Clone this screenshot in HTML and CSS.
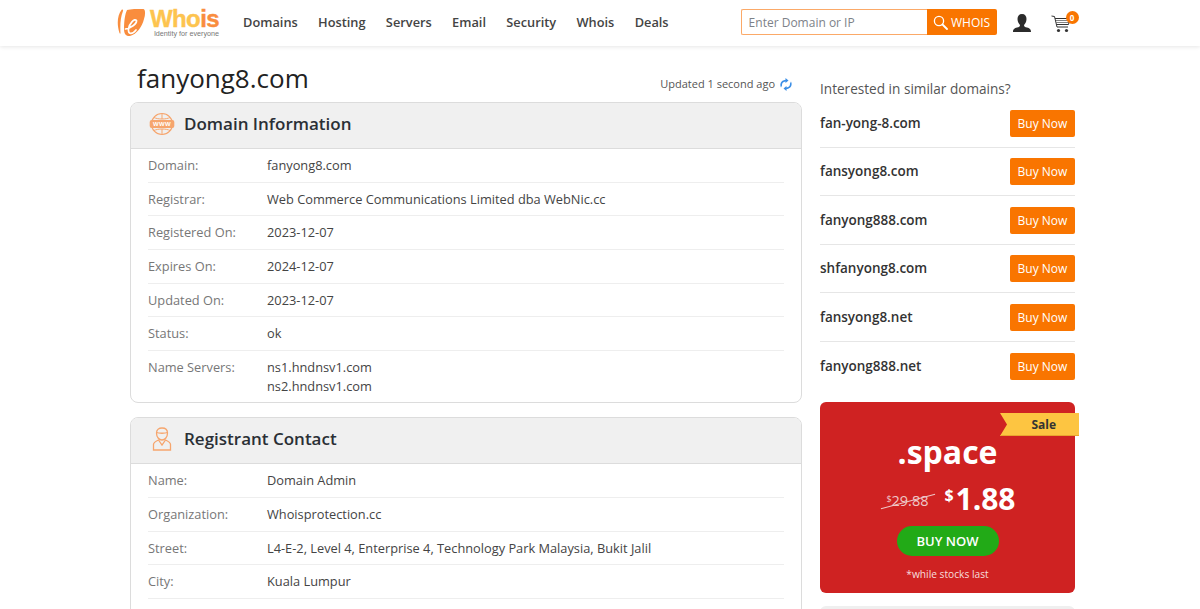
FILE: index.html
```html
<!DOCTYPE html>
<html lang="en">
<head>
<meta charset="utf-8">
<title>fanyong8.com - Whois</title>
<link rel="stylesheet" href="styles.css">
</head>
<body>
<header class="topbar">
  <div class="topbar-inner">
    <a class="logo" href="#">
      <svg class="logo-mark" width="29" height="28" viewBox="0 0 29 28">
        <path d="M4.500 1 C0.500 6 -0.500 15 2.500 24 C3 25 3.500 25 3.500 24 C3 16 3.500 8 6 2 C6.500 1 5.500 0 4.500 1 Z" fill="#f98d3e"/>
        <path d="M10 1 C14 0 22 -0.500 26.500 0 C28.500 0.500 28.500 6 27 10 C25 18 20 25 13 27 C9 27.500 7 25 7 20 C7 12 8 5 10 1 Z" fill="#f98d3e"/>
        <path d="M8.500 20 C13.500 19 20 15 19.500 11.500 C17.500 9 12.500 14 11.500 20 C11 25.500 15 26 19 21" fill="none" stroke="#fff" stroke-width="1.700" stroke-linecap="round"/>
      </svg>
      <span class="logo-text">
        <span class="logo-word"><span class="logo-who">Who</span><span class="logo-is">is</span></span>
        <span class="logo-tag">Identity for everyone</span>
      </span>
    </a>
    <nav class="nav">
      <a href="#">Domains</a>
      <a href="#">Hosting</a>
      <a href="#">Servers</a>
      <a href="#">Email</a>
      <a href="#">Security</a>
      <a href="#">Whois</a>
      <a href="#">Deals</a>
    </nav>
    <form class="search">
      <input class="search-input" type="text" placeholder="Enter Domain or IP">
      <button class="search-btn" type="button">
        <svg width="15" height="15" viewBox="0 0 15 15"><circle cx="6" cy="6" r="4.600" fill="none" stroke="#fff" stroke-width="1.300"/><path d="M9.500 9.500 L14 14" stroke="#fff" stroke-width="1.800" stroke-linecap="round"/></svg>
        WHOIS
      </button>
    </form>
    <a class="user" href="#" aria-label="Account">
      <svg width="18" height="18" viewBox="0 0 18 18"><path d="M9 0 C12 0 13.500 2 13.500 5 C13.500 8 12 10 11 11 C11 12.500 12 13 14 13.600 C16.500 14.400 18 15 18 18 L0 18 C0 15 1.500 14.400 4 13.600 C6 13 7 12.500 7 11 C6 10 4.500 8 4.500 5 C4.500 2 6 0 9 0 Z" fill="#2b2b2b"/></svg>
    </a>
    <a class="cart" href="#" aria-label="Cart">
      <svg width="20" height="18" viewBox="0 0 20 18"><path d="M0.500 1 L3.500 1.500 L6 12 L17 12 M4 3.500 L19 3.500 L17.500 9.500 L5.300 9.500" fill="none" stroke="#333" stroke-width="1"/><path d="M5 5.500 H18.500 M5.300 7.500 H18" stroke="#333" stroke-width=".6"/><circle cx="7.500" cy="15.500" r="1.600" fill="#333"/><circle cx="15.500" cy="15.500" r="1.600" fill="#333"/></svg>
      <span class="cart-badge">0</span>
    </a>
  </div>
</header>

<main class="page">
  <section class="main-col">
    <div class="title-row">
      <h1 class="domain-title">fanyong8.com</h1>
      <p class="updated">Updated 1 second ago
        <svg width="14" height="15" viewBox="0 0 14 15"><path d="M2 10.500 C0.500 7.500 1.500 3.500 6.500 2.800 L6.500 1 L9.500 3.600 L6.500 6 L6.500 4.500 C4 4.800 2.800 6.500 3 8.500 Z M12 4.500 C13.500 7.500 12.500 11.500 7.500 12.200 L7.500 14 L4.500 11.400 L7.500 9 L7.500 10.500 C10 10.200 11.200 8.500 11 6.500 Z" fill="#3a8ee6"/></svg>
      </p>
    </div>

    <article class="card">
      <div class="card-head">
        <svg class="card-icon" width="26" height="24" viewBox="0 0 26 24" fill="none" stroke="#f6a56d">
          <circle cx="13" cy="12" r="10.500" stroke-width="1.200"/>
          <path d="M5 5.500 C9 7.500 17 7.500 21 5.500 M5 18.500 C9 16.500 17 16.500 21 18.500 M13 1.500 V7 M13 17 V22.500" stroke-width="1"/>
          <rect x="0.700" y="8" width="24.600" height="8" rx="2" fill="#f6a56d" stroke="none"/>
          <text x="13" y="14.300" text-anchor="middle" class="www">WWW</text>
        </svg>
        <h2>Domain Information</h2>
      </div>
      <div class="card-body">
        <div class="row"><span class="label">Domain:</span><span class="value">fanyong8.com</span></div>
        <div class="row"><span class="label">Registrar:</span><span class="value">Web Commerce Communications Limited dba WebNic.cc</span></div>
        <div class="row"><span class="label">Registered On:</span><span class="value">2023-12-07</span></div>
        <div class="row"><span class="label">Expires On:</span><span class="value">2024-12-07</span></div>
        <div class="row"><span class="label">Updated On:</span><span class="value">2023-12-07</span></div>
        <div class="row"><span class="label">Status:</span><span class="value">ok</span></div>
        <div class="row"><span class="label">Name Servers:</span><span class="value">ns1.hndnsv1.com<br>ns2.hndnsv1.com</span></div>
      </div>
    </article>

    <article class="card">
      <div class="card-head">
        <svg class="card-icon" width="26" height="24" viewBox="0 0 26 24" fill="none" stroke="#f6a56d" stroke-width="1.300">
          <path d="M7.500 6 C7.500 2.500 10 1 13 1 C16 1 18.500 2.500 18.500 6 C18.500 10 16 13 13 13 C10 13 7.500 10 7.500 6 Z"/>
          <path d="M7.500 5.500 C10 6.500 16 6.500 18.500 5.500"/>
          <path d="M9.500 13 C6 14.500 4.500 15.500 4.500 17.500 V23 H21.500 V17.500 C21.500 15.500 20 14.500 16.500 13 L13 18 Z"/>
        </svg>
        <h2>Registrant Contact</h2>
      </div>
      <div class="card-body card-body-open">
        <div class="row"><span class="label">Name:</span><span class="value">Domain Admin</span></div>
        <div class="row"><span class="label">Organization:</span><span class="value">Whoisprotection.cc</span></div>
        <div class="row"><span class="label">Street:</span><span class="value">L4-E-2, Level 4, Enterprise 4, Technology Park Malaysia, Bukit Jalil</span></div>
        <div class="row"><span class="label">City:</span><span class="value">Kuala Lumpur</span></div>
      </div>
    </article>
  </section>

  <aside class="side-col">
    <h3 class="side-title">Interested in similar domains?</h3>
    <ul class="suggest">
      <li><span>fan-yong-8.com</span><a class="buy" href="#">Buy Now</a></li>
      <li><span>fansyong8.com</span><a class="buy" href="#">Buy Now</a></li>
      <li><span>fanyong888.com</span><a class="buy" href="#">Buy Now</a></li>
      <li><span>shfanyong8.com</span><a class="buy" href="#">Buy Now</a></li>
      <li><span>fansyong8.net</span><a class="buy" href="#">Buy Now</a></li>
      <li><span>fanyong888.net</span><a class="buy" href="#">Buy Now</a></li>
    </ul>
    <div class="promo">
      <span class="ribbon">Sale</span>
      <div class="promo-tld">.space</div>
      <div class="promo-price">
        <span class="old"><sup>$</sup>29.88</span>
        <span class="new"><sup>$</sup>1.88</span>
      </div>
      <a class="promo-btn" href="#">BUY NOW</a>
      <div class="promo-note">*while stocks last</div>
    </div>
    <div class="next-box"></div>
  </aside>
</main>
</body>
</html>
```

FILE: styles.css
```css
* { box-sizing: border-box; }
html, body { height: 609px; overflow: hidden; }
body {
  margin: 0;
  background: #fff;
  color: #333;
  font-family: "Open Sans", "Liberation Sans", sans-serif;
  font-size: 12.800px;
}
a { text-decoration: none; color: inherit; }

.topbar {
  height: 46px;
  background: #fff;
  box-shadow: 0 1px 4px rgba(0, 0, 0, .1);
  position: relative;
}
.topbar-inner {
  width: 1200px;
  height: 44px;
  padding-left: 117px;
  display: flex;
  align-items: center;
}
.logo { display: flex; align-items: center; width: 126px; }
.logo-mark { flex: none; margin-top: 1px; }
.logo-text { display: flex; flex-direction: column; align-items: flex-end; width: 73px; margin-top: 2px; }
.logo-word {
  font-family: "Liberation Sans", sans-serif;
  font-weight: 700;
  font-size: 24px;
  line-height: 20px;
  letter-spacing: -.6px;
  -webkit-text-stroke: .4px currentColor;
}
.logo-who { color: #fdc44f; }
.logo-is { color: #f98d3e; }
.logo-tag {
  font-family: "Liberation Sans", sans-serif;
  font-size: 7.200px;
  line-height: 8px;
  color: #777;
  margin-top: 1px;
}

.nav { display: flex; gap: 20.300px; font-size: 12.800px; font-weight: 600; color: #444; }
.nav a { line-height: 18px; }

.search {
  display: flex;
  height: 26px;
  width: 256px;
  margin-left: 72px;
  flex: none;
}
.search-input {
  flex: 1;
  min-width: 0;
  border: 1px solid #fba968;
  border-right: 0;
  border-radius: 2px 0 0 2px;
  padding: 0 7px;
  font: 12px "Open Sans", sans-serif;
  outline: none;
}
.search-input::placeholder { color: #7d8288; opacity: 1; }
.search-btn {
  width: 70px;
  flex: none;
  border: 0;
  border-radius: 0 2px 2px 0;
  background: #f97500;
  color: #fff;
  font: 12px "Open Sans", sans-serif;
  padding: 0;
  display: flex;
  align-items: center;
  justify-content: center;
  gap: 3px;
}
.user { display: flex; margin-left: 16px; margin-top: 2px; }
.cart { display: flex; margin-left: 20px; position: relative; margin-top: 4px; }
.cart-badge {
  position: absolute;
  top: -4px;
  right: -8px;
  width: 13px;
  height: 13px;
  border-radius: 50%;
  background: #f97500;
  color: #fff;
  font-size: 8px;
  font-weight: 700;
  line-height: 13px;
  text-align: center;
}

.page {
  width: 945px;
  margin-left: 130px;
  display: flex;
  gap: 18px;
  align-items: flex-start;
}
.main-col { width: 672px; flex: none; }
.title-row {
  height: 56px;
  padding: 0 2px 0 7px;
  display: flex;
  justify-content: space-between;
  align-items: flex-start;
}
.domain-title {
  margin: 15px 0 0;
  font-size: 26px;
  line-height: 34px;
  font-weight: 400;
  color: #222;
}
.updated {
  margin: 29px 7px 0 0;
  display: flex;
  align-items: center;
  gap: 4px;
  font-size: 11px;
  line-height: 18px;
  color: #555;
}

.card {
  border: 1px solid #dcdcdc;
  border-radius: 8px;
  margin-bottom: 14.300px;
  overflow: hidden;
}
.card-head {
  height: 46px;
  background: #f0f0f0;
  border-bottom: 1px solid #dcdcdc;
  display: flex;
  align-items: center;
  padding: 0 0 3px 18px;
  gap: 9px;
}
.card-icon { flex: none; }
.www { font: 700 6px "Liberation Sans", sans-serif; fill: #fff; stroke: none; letter-spacing: .3px; }
.card-head h2 {
  margin: 0;
  font-size: 17px;
  line-height: 24px;
  font-weight: 600;
  color: #2a2f35;
}
.card-body { padding: 0.200px 17px 0; }
.row {
  display: flex;
  padding: 7px 0 6.400px;
  line-height: 19.200px;
  border-bottom: 1px solid #eee;
}
.row:last-child { border-bottom: 0; padding-bottom: 5.800px; }
.card-body-open { padding-bottom: 40px; }
.card-body-open .row:last-child { border-bottom: 1px solid #eee; padding-bottom: 6.400px; }
.label { width: 119px; flex: none; color: #777; }
.value { color: #444; }

.side-col { width: 255px; flex: none; }
.side-title {
  margin: 33px 0 0;
  font-size: 13.600px;
  line-height: 20px;
  font-weight: 400;
  color: #555;
}
.suggest { list-style: none; margin: 0 0 12px; padding: 0; }
.suggest li {
  height: 48.500px;
  display: flex;
  justify-content: space-between;
  align-items: center;
  border-bottom: 1px solid #e6e6e6;
  font-size: 13.500px;
  font-weight: 600;
  color: #333;
}
.suggest li:first-child { padding-top: 1px; }
.suggest li:last-child { border-bottom: 0; }
.buy {
  width: 65px;
  height: 27px;
  margin-top: 1px;
  background: #f97500;
  border-radius: 2px;
  color: #fff;
  font-size: 12px;
  font-weight: 400;
  line-height: 27px;
  text-align: center;
}

.promo {
  height: 191px;
  background: #cf2222;
  border-radius: 6px;
  color: #fff;
  text-align: center;
  position: relative;
  padding-top: 29px;
}
.ribbon {
  position: absolute;
  top: 11px;
  right: -4px;
  width: 79px;
  height: 23px;
  background: #fdc541;
  border-bottom: 1px solid #e9a52f;
  color: #333;
  font-size: 12px;
  font-weight: 700;
  line-height: 23px;
  text-align: right;
  padding-right: 23px;
  clip-path: polygon(0 0, 100% 0, 100% 100%, 0 100%, 7px 50%);
}
.promo-tld { font-size: 32px; line-height: 42px; font-weight: 700; }
.promo-price {
  display: flex;
  justify-content: center;
  align-items: center;
  gap: 16px;
  margin-top: 4px;
  height: 44px;
  padding-left: 7px;
}
.old {
  font-size: 14.500px;
  line-height: 20px;
  margin-top: 4px;
  color: #eec7c7;
  position: relative;
  padding: 0 0 0 5px;
}
.old::after {
  content: "";
  position: absolute;
  left: -7px;
  right: -7px;
  top: 50%;
  border-top: 1px solid #eec7c7;
  transform: rotate(-15deg);
}
.old sup { font-size: 9px; position: absolute; left: 0; top: 3px; line-height: 1; }
.new { font-size: 30px; font-weight: 700; line-height: 44px; position: relative; padding-left: 11px; }
.new sup { font-size: 16px; position: absolute; left: 0; top: 10px; line-height: 1; }
.promo-btn {
  display: block;
  width: 102px;
  height: 30px;
  margin: 5px auto 0;
  border-radius: 15px;
  background: #22aa17;
  font-size: 13px;
  font-weight: 600;
  line-height: 30px;
}
.promo-note { margin-top: 11px; font-size: 10.200px; line-height: 14px; color: #f7dede; }
.next-box { height: 30px; margin-top: 13px; background: #efefef; border-radius: 6px; }
```
